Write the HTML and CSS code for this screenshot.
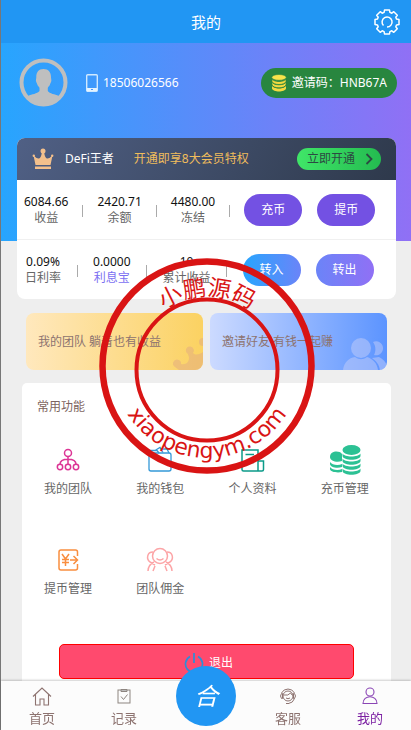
FILE: index.html
```html
<!DOCTYPE html>
<html lang="zh-CN">
<head>
    <meta charset="UTF-8">
    <meta name="viewport" content="width=device-width, initial-scale=1.0">
    <title>我的</title>
    <link rel="stylesheet" href="styles.css">
</head>
<body>
<div class="page">
    <header class="header">
        <h1>我的</h1>
        <a class="settings" href="#" aria-label="设置">
            <svg width="28" height="28" viewBox="-14 -14 28 28" fill="none" stroke="#fff" stroke-width="1.5" stroke-linejoin="round">
                <path d="M-2.5-12H2.5L2.9-9.6L4.8-8.8L6.8-10.3L10.3-6.8L8.8-4.8L9.6-2.9L12-2.5V2.5L9.6 2.9L8.8 4.8L10.3 6.8L6.8 10.3L4.8 8.8L2.9 9.6L2.5 12H-2.5L-2.9 9.6L-4.8 8.8L-6.8 10.3L-10.3 6.8L-8.8 4.8L-9.6 2.9L-12 2.5V-2.5L-9.6-2.9L-8.8-4.8L-10.3-6.8L-6.8-10.3L-4.8-8.8L-2.9-9.6Z"/>
                <path d="M-3.5 3.5A5 5 0 1 1 0 5"/>
            </svg>
        </a>
    </header>
    <main class="main">
        <section class="profile">
            <svg class="avatar" width="49" height="49" viewBox="0 0 49 49">
                <defs><clipPath id="face"><circle cx="24.5" cy="24.5" r="23"/></clipPath></defs>
                <path clip-path="url(#face)" fill="#bfbfbf" d="M24.5 11c5 0 7.500 3.500 7.500 8 0 2 .5 2 .3 4-.2 1.500-1 2-1.500 4-.3 1.200-2 2-2 3v3c2 3 7 3 11 5v12H9V38c4-2 9-2 11.500-5v-3c0-1-1.800-2-2-3-.5-2-1.300-2.500-1.500-4-.2-2 .3-2 .3-4 0-4.500 2.200-8 7.200-8z"/>
                <circle cx="24.5" cy="24.5" r="22" fill="none" stroke="#bfbfbf" stroke-width="4"/>
            </svg>
            <svg class="phone-icon" width="12" height="18" viewBox="0 0 12 18">
                <rect x=".7" y=".7" width="10.6" height="16.6" rx="1" fill="none" stroke="#cfe9ff" stroke-width="1.4"/>
                <path d="M1 14h10v3H1z" fill="#e4f3ff"/>
                <path d="M5 15h2v1H5z" fill="#4b96fb"/>
            </svg>
            <span class="phone">18506026566</span>
            <button class="invite" type="button">
                <svg width="16" height="18" viewBox="0 0 16 18" fill="#f5d93f">
                    <path d="M1 11.500c1 4 13 4 14 0v3c-1 4-13 4-14 0z"/>
                    <path d="M1 7.800c1 4 13 4 14 0v3c-1 4-13 4-14 0z" stroke="#28863f" stroke-width=".8"/>
                    <path d="M1 4.500c1 4 13 4 14 0v3c-1 4-13 4-14 0z" stroke="#28863f" stroke-width=".8"/>
                    <ellipse cx="8" cy="3.4" rx="7.2" ry="2.9" fill="#f8e34b" stroke="#28863f" stroke-width=".6"/>
                </svg>
                <span>邀请码：HNB67A</span>
            </button>
        </section>

        <section class="account">
            <div class="vip">
                <svg width="22" height="22" viewBox="0 0 22 22" fill="#f3c08c">
                    <path d="M3.500 17L1.500 7.500Q5 11 7 10.500T10 4h2q1 6 3 6.500t5.500-3L18.500 17z"/>
                    <path d="M3 18.500h16v2.500H3z"/>
                    <circle cx="11" cy="3" r="2.5"/><circle cx="1.8" cy="7.8" r="1.2"/><circle cx="20.2" cy="7.8" r="1.2"/>
                </svg>
                <span class="vip-name">DeFi王者</span>
                <span class="vip-text">开通即享8大会员特权</span>
                <button class="vip-open" type="button">立即开通
                    <svg width="8" height="12" viewBox="0 0 8 12" fill="none" stroke="#2c4a42" stroke-width="1.8"><path d="M1.500 1l5 5-5 5"/></svg>
                </button>
            </div>
            <div class="stats">
                <div class="stat"><b>6084.66</b><span>收益</span></div>
                <i class="line"></i>
                <div class="stat"><b>2420.71</b><span>余额</span></div>
                <i class="line"></i>
                <div class="stat"><b>4480.00</b><span>冻结</span></div>
                <i class="line"></i>
                <div class="actions">
                    <button class="pill" type="button">充币</button>
                    <button class="pill" type="button">提币</button>
                </div>
            </div>
            <div class="stats stats-interest">
                <div class="stat"><b>0.09%</b><span>日利率</span></div>
                <i class="line"></i>
                <div class="stat"><b>0.0000</b><a href="#">利息宝</a></div>
                <i class="line"></i>
                <div class="stat"><b>10</b><span>累计收益</span></div>
                <i class="line"></i>
                <div class="actions">
                    <button class="pill pill-in" type="button">转入</button>
                    <button class="pill pill-out" type="button">转出</button>
                </div>
            </div>
        </section>

        <section class="promos">
            <a class="promo promo-team" href="#">
                <span>我的团队 躺着也有收益</span>
                <svg width="30" height="34" viewBox="0 0 30 34" fill="#e3ad80" opacity=".55">
                    <path d="M6 34L2 31a4 4 0 1 1 6-3c5 1 8-2 8-6 0-2-1-3-1-4a4 4 0 1 1 5-1c3 3 7 1 10-1v18z"/>
                    <path d="M30 2v8a4 4 0 0 1 0-8z"/>
                </svg>
            </a>
            <a class="promo promo-invite" href="#">
                <span>邀请好友 有钱一起赚</span>
                <svg width="44" height="34" viewBox="0 0 44 34" fill="#c4cdfa" opacity=".5">
                    <circle cx="18" cy="12" r="10"/>
                    <path d="M0 34c1-8 6-12 12-13 4 3 8 3 12 0 6 2 10 6 11 13z"/>
                    <path d="M30 6a7 7 0 1 1 1 13c2-4 2-9-1-13zM29 22l7-1c4 2 7 5 8 9v4h-7c-1-6-4-9-8-12z"/>
                </svg>
            </a>
        </section>

        <section class="functions">
            <h2>常用功能</h2>
            <div class="grid">
                <a href="#">
                    <svg width="32" height="32" viewBox="0 0 32 32" fill="none" stroke="#dc3595" stroke-width="1.5">
                        <circle cx="16" cy="9" r="3.5"/><circle cx="8" cy="23" r="2.7"/><circle cx="16" cy="23" r="2.7"/><circle cx="24" cy="23" r="2.7"/>
                        <path d="M16 12.500v8M8 20.300c0-3 3-5 8-5s8 2 8 5"/>
                    </svg>
                    <span>我的团队</span>
                </a>
                <a href="#">
                    <svg width="32" height="32" viewBox="0 0 32 32" fill="none" stroke="#3599d8" stroke-width="1.3">
                        <rect x="5" y="9" width="22" height="18" rx="2"/><path d="M5 10V6.500h8l2 2.500M11 6.500l5-3 3 5M18 5h5l2 4"/>
                    </svg>
                    <span>我的钱包</span>
                </a>
                <a href="#">
                    <svg width="32" height="32" viewBox="0 0 32 32" fill="none" stroke="#0b9b89" stroke-width="1.5">
                        <path d="M21 27H6.500Q5 27 5 25.500V6h16zV17h5.500v8.500Q26.500 27 25 27h-4M8.500 10.500H17M8.500 18.500H17"/>
                    </svg>
                    <span>个人资料</span>
                </a>
                <a href="#">
                    <svg width="32" height="32" viewBox="0 0 32 32" fill="#2cc194">
                        <path d="M1 13c0-6 9-7 12-3v7c-5 2-12 0-12-4zM1 18c2 3 8 4 12 2v3c-5 2-12 0-12-3zM1 23c2 3 8 4 12 2v3c-5 1-12 0-12-3z"/>
                        <ellipse cx="22.5" cy="6" rx="9" ry="5"/>
                        <path d="M13.500 9.500c2 4 16 4 18 0v2.500c-1 5-17 5-18 0zM13.500 14.500c2 4 16 4 18 0V17c-1 5-17 5-18 0zM13.500 19.500c2 4 16 4 18 0V22c-1 5-17 5-18 0zM13.500 24.500c2 4 16 4 18 0V27c-1 5-17 5-18 0z"/>
                    </svg>
                    <span>充币管理</span>
                </a>
                <a href="#">
                    <svg width="32" height="32" viewBox="0 0 32 32" fill="none" stroke="#f98e3f" stroke-width="1.5">
                        <path d="M25.500 12V8Q25.500 6 23.500 6H9Q7 6 7 8v16q0 2 2 2h14.500q2 0 2-2v-4M10 10l3.500 5 3.500-5M13.500 15v7M10 15.500h7M10 18.500h7M18 16h7M21.500 12l4 4-4 4"/>
                    </svg>
                    <span>提币管理</span>
                </a>
                <a href="#">
                    <svg width="32" height="32" viewBox="0 0 32 32" fill="none" stroke="#fca5a7" stroke-width="1.5">
                        <circle cx="16" cy="12" r="7.5"/><path d="M12.500 14.500q3.500 3 7 0M9 8C3 8 2 15 6 18M23 8c6 0 7 7 3 10M4 27c0-4 2-7 6-9M28 27c0-4-2-7-6-9M9 27l2-5M23 27l-2-5M6 18l5 3M26 18l-5 3"/>
                    </svg>
                    <span>团队佣金</span>
                </a>
            </div>
            <button class="logout" type="button">
                <svg width="20" height="20" viewBox="0 0 20 20" fill="none" stroke="#2b8fd9" stroke-width="1.7"><path d="M10 0v10M6 3.500a8.500 8.500 0 1 0 8 0"/></svg>
                <span>退出</span>
            </button>
        </section>
    </main>

    <!-- seal -->
    <svg class="seal" width="222" height="220" viewBox="0 0 222 220" aria-hidden="true">
        <defs>
            <path id="sealTop" d="M38 114A74 74 0 0 1 186 114"/>
            <path id="sealBottom" d="M18 108A94 94 0 0 0 206 108"/>
        </defs>
        <circle cx="112" cy="110" r="104.5" stroke-width="6.5"/>
        <circle cx="112" cy="114" r="70.5" stroke-width="4"/>
        <text font-size="23"><textPath href="#sealTop" startOffset="50%" text-anchor="middle">小鹏源码</textPath></text>
        <text class="seal-url" font-size="22"><textPath href="#sealBottom" startOffset="50%" text-anchor="middle">xiaopengym.com</textPath></text>
    </svg>

    <nav class="tabbar">
        <a href="#">
            <svg width="20" height="20" viewBox="0 0 20 20" fill="none" stroke="#8d7370" stroke-width="1.1"><path d="M1 10.500L10 2l9 8.500M3.500 8.500V19H8v-6h4v6h4.500V8.500"/></svg>
            <span>首页</span>
        </a>
        <a href="#">
            <svg width="20" height="20" viewBox="0 0 20 20" fill="none" stroke="#8d8580" stroke-width="1"><rect x="4" y="4" width="12" height="13"/><path d="M7 3.500h6v2H7z" fill="#bbb"/><path d="M7 10.500l2.500 3 4-5"/></svg>
            <span>记录</span>
        </a>
        <a class="center" href="#">
            <span class="center-logo">合</span>
        </a>
        <a href="#">
            <svg width="20" height="20" viewBox="0 0 20 20" fill="none" stroke="#8d7370" stroke-width="1"><path d="M3.500 7a7.300 7.300 0 0 1 13 0M4.500 7.500H3.500Q1.500 10 3.500 12.500h1zM15.500 7.500h1q2 2.500 0 5h-1zM16.500 12.500q-1.500 4.500-6 5M8 17.500h3"/><circle cx="10" cy="10" r="5"/><path d="M5.500 9q5 1 7-2l2 2.500M8 12q2 1.500 4 0"/></svg>
            <span>客服</span>
        </a>
        <a class="active" href="#">
            <svg width="20" height="20" viewBox="0 0 20 20" fill="none" stroke="#8a45b5" stroke-width="1.1"><circle cx="10" cy="6" r="4"/><path d="M3 17.500c0-9 14-9 14 0z"/></svg>
            <span>我的</span>
        </a>
    </nav>
</div>
</body>
</html>
```
FILE: styles.css
```css
* {
    box-sizing: border-box;
}
body {
    margin: 0;
    font-family: "Noto Sans", "Noto Sans CJK SC", sans-serif;
    font-size: 12px;
    line-height: 16px;
    color: #666;
    background-color: #eee;
}
a {
    color: inherit;
    text-decoration: none;
}
button {
    font: inherit;
    border: none;
    padding: 0;
    cursor: pointer;
}
svg {
    display: block;
    flex: none;
}
.page {
    position: relative;
    display: flex;
    flex-direction: column;
    min-height: 100vh;
    border-left: 1px solid #777;
}
.header {
    display: grid;
    grid-template-columns: 1fr auto 1fr;
    align-items: center;
    height: 43px;
    padding: 0 10px;
    background: #2196f3;
    color: #fff;
}
.header h1 {
    grid-column: 2;
    margin: 0;
    font-size: 15px;
    font-weight: normal;
}
.settings {
    justify-self: end;
}
.main {
    flex: 1;
    display: flex;
    flex-direction: column;
    background: linear-gradient(to right, #27a5fe, #9070f5) no-repeat;
    background-size: 100% 198px;
}

/* profile */
.profile {
    display: flex;
    align-items: center;
    padding: 15px 14px 31px 18px;
    color: #fff;
}
.phone-icon {
    margin: 0 5px 0 18px;
}
.invite {
    display: flex;
    align-items: center;
    gap: 5px;
    height: 30px;
    margin-left: auto;
    padding: 0 10px;
    border-radius: 15px;
    background: #28863f;
    color: #fff;
}

/* account card */
.account {
    margin: 0 15px 0 16px;
    border-radius: 8px;
    background: #fff;
    overflow: hidden;
}
.vip {
    display: flex;
    align-items: center;
    height: 42px;
    padding: 0 15px;
    background: linear-gradient(120deg, #506085, #2e394b);
    color: #fff;
}
.vip-name {
    margin: 0 20px 0 11px;
}
.vip-text {
    color: #f0bd5c;
}
.vip-open {
    display: flex;
    align-items: center;
    gap: 10px;
    height: 22px;
    margin-left: auto;
    padding: 0 8px 0 10px;
    border-radius: 11px;
    background: linear-gradient(to right, #40e668, #24bb50);
    color: #2c4a42;
}
.stats {
    display: flex;
    align-items: center;
    gap: 12px;
    height: 60px;
    padding-left: 7px;
    border-bottom: 1px solid #f0f0f0;
}
.stats-interest {
    height: 59px;
    gap: 14px;
    padding-left: 8px;
    border-bottom: none;
}
.stat {
    text-align: center;
}
.stat b {
    display: block;
    font-weight: normal;
    color: #111;
}
.stat a {
    color: #7c70f2;
}
.line {
    width: 5px;
    height: 12px;
    margin-top: 3px;
    background: linear-gradient(#aaa, #aaa) center / 1px 100% no-repeat;
}
.stats-interest .line {
    width: 4px;
}
.actions {
    display: flex;
    gap: 15px;
}
.pill {
    width: 58px;
    height: 32px;
    border-radius: 16px;
    background: #7351e3;
    color: #fff;
}
.pill-in {
    background: linear-gradient(to right, #27a5fe, #6b84f8);
}
.pill-out {
    background: linear-gradient(to right, #6b84f8, #9070f5);
}

/* promo banners */
.promos {
    display: grid;
    grid-template-columns: 1fr 1fr;
    gap: 7px;
    margin: 14px 24px 13px 25px;
    color: #8d7370;
}
.promo {
    display: flex;
    align-items: center;
    justify-content: space-between;
    height: 57px;
    padding-left: 12px;
    border-radius: 8px;
    overflow: hidden;
    white-space: nowrap;
}
.promo svg {
    align-self: flex-end;
}
.promo-team {
    background: linear-gradient(to right, #ffe8bd, #fbd262);
}
.promo-invite {
    background: linear-gradient(to right, #ccdaff, #5c94ff);
}

/* functions */
.functions {
    flex: 1;
    margin: 0 20px 0 21px;
    padding-top: 16px;
    border-radius: 5px 5px 0 0;
    background: #fff;
}
.functions h2 {
    margin: 0 15px 29px;
    font-size: 12px;
    font-weight: normal;
    color: #7d6460;
}
.grid {
    display: grid;
    grid-template-columns: repeat(4, 1fr);
    row-gap: 47px;
}
.grid a {
    display: flex;
    flex-direction: column;
    align-items: center;
    gap: 5px;
}
.logout {
    display: flex;
    align-items: center;
    justify-content: center;
    gap: 5px;
    width: 80%;
    height: 35px;
    margin: 47px auto 50px;
    padding: 2px 0 0 4px;
    border: 1px solid #f00;
    border-radius: 5px;
    background: #ff4a6e;
    color: #fff;
}

/* seal */
.seal {
    position: absolute;
    top: 256px;
    left: 50%;
    transform: translateX(-50%);
    pointer-events: none;
    z-index: 1;
}
.seal circle {
    fill: none;
    stroke: #d91414;
}
.seal text {
    fill: #d91414;
    font-family: "Noto Sans CJK SC", sans-serif;
}
.seal .seal-url {
    font-family: "DejaVu Sans", sans-serif;
}

/* tab bar */
.tabbar {
    position: fixed;
    left: 1px;
    right: 0;
    bottom: 0;
    z-index: 2;
    display: grid;
    grid-template-columns: repeat(5, 1fr);
    height: 49px;
    background: #fcfcfc;
    box-shadow: 0 -1px 2px rgba(0, 0, 0, 0.2);
    font-size: 13px;
    color: #8d7370;
}
.tabbar a {
    display: flex;
    flex-direction: column;
    align-items: center;
    gap: 4px;
    padding-top: 5px;
}
.tabbar .active {
    color: #7b1fa2;
}
.tabbar .center {
    justify-content: center;
    justify-self: center;
    width: 60px;
    height: 60px;
    margin-top: -15px;
    padding: 0;
    border-radius: 50%;
    background: #2196f3;
    color: #fff;
}
.center-logo {
    font-size: 24px;
    font-style: italic;
    line-height: 28px;
}
```
